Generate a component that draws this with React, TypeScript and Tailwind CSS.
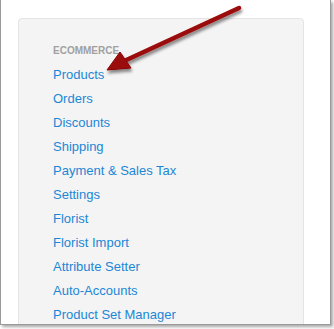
import React from "react";

const links = [
  "Products",
  "Orders",
  "Discounts",
  "Shipping",
  "Payment & Sales Tax",
  "Settings",
  "Florist",
  "Florist Import",
  "Attribute Setter",
  "Auto-Accounts",
  "Product Set Manager",
];

// callout arrow drawn over the screenshot
function Arrow() {
  return (
    <svg
      className="pointer-events-none absolute left-0 top-0"
      width="334"
      height="329"
      viewBox="0 0 334 329"
    >
      <defs>
        <filter id="sh" x="-20%" y="-20%" width="140%" height="140%">
          <feDropShadow dx="1" dy="3" stdDeviation="1.6" floodColor="#000" floodOpacity="0.45" />
        </filter>
      </defs>
      <g filter="url(#sh)">
        <line x1="239" y1="8" x2="122" y2="62" stroke="#9b0a0a" strokeWidth="4.5" strokeLinecap="round" />
        <polygon points="107,70 120,52 131,68" fill="#9b0a0a" stroke="#8a0606" strokeWidth="1" strokeLinejoin="round" />
      </g>
    </svg>
  );
}

export default function App() {
  return (
    <div className="relative h-[329px] w-[334px] overflow-hidden bg-white" style={{ fontFamily: '"Liberation Sans", Arial, sans-serif' }}>
      <div className="h-[325px] w-[331px] overflow-hidden border-b border-l border-r border-[#9a9a9a] bg-white shadow-[2px_2px_3px_rgba(0,0,0,0.35)]">
        <div className="ml-[17px] mt-[18px] w-[286px] rounded-t-[4px] border border-[#e4e4e4] bg-[#f4f4f4] pb-4 pl-[34px] pt-[24px]">
          <div className="text-[10px] font-bold leading-4 text-[#a0a0a0]">ECOMMERCE</div>
          <ul className="mt-[4px]">
            {links.map((l) => (
              <li key={l} className="text-[13px] leading-6 text-[#1b87d6]">
                {l}
              </li>
            ))}
          </ul>
        </div>
      </div>
      <Arrow />
    </div>
  );
}
